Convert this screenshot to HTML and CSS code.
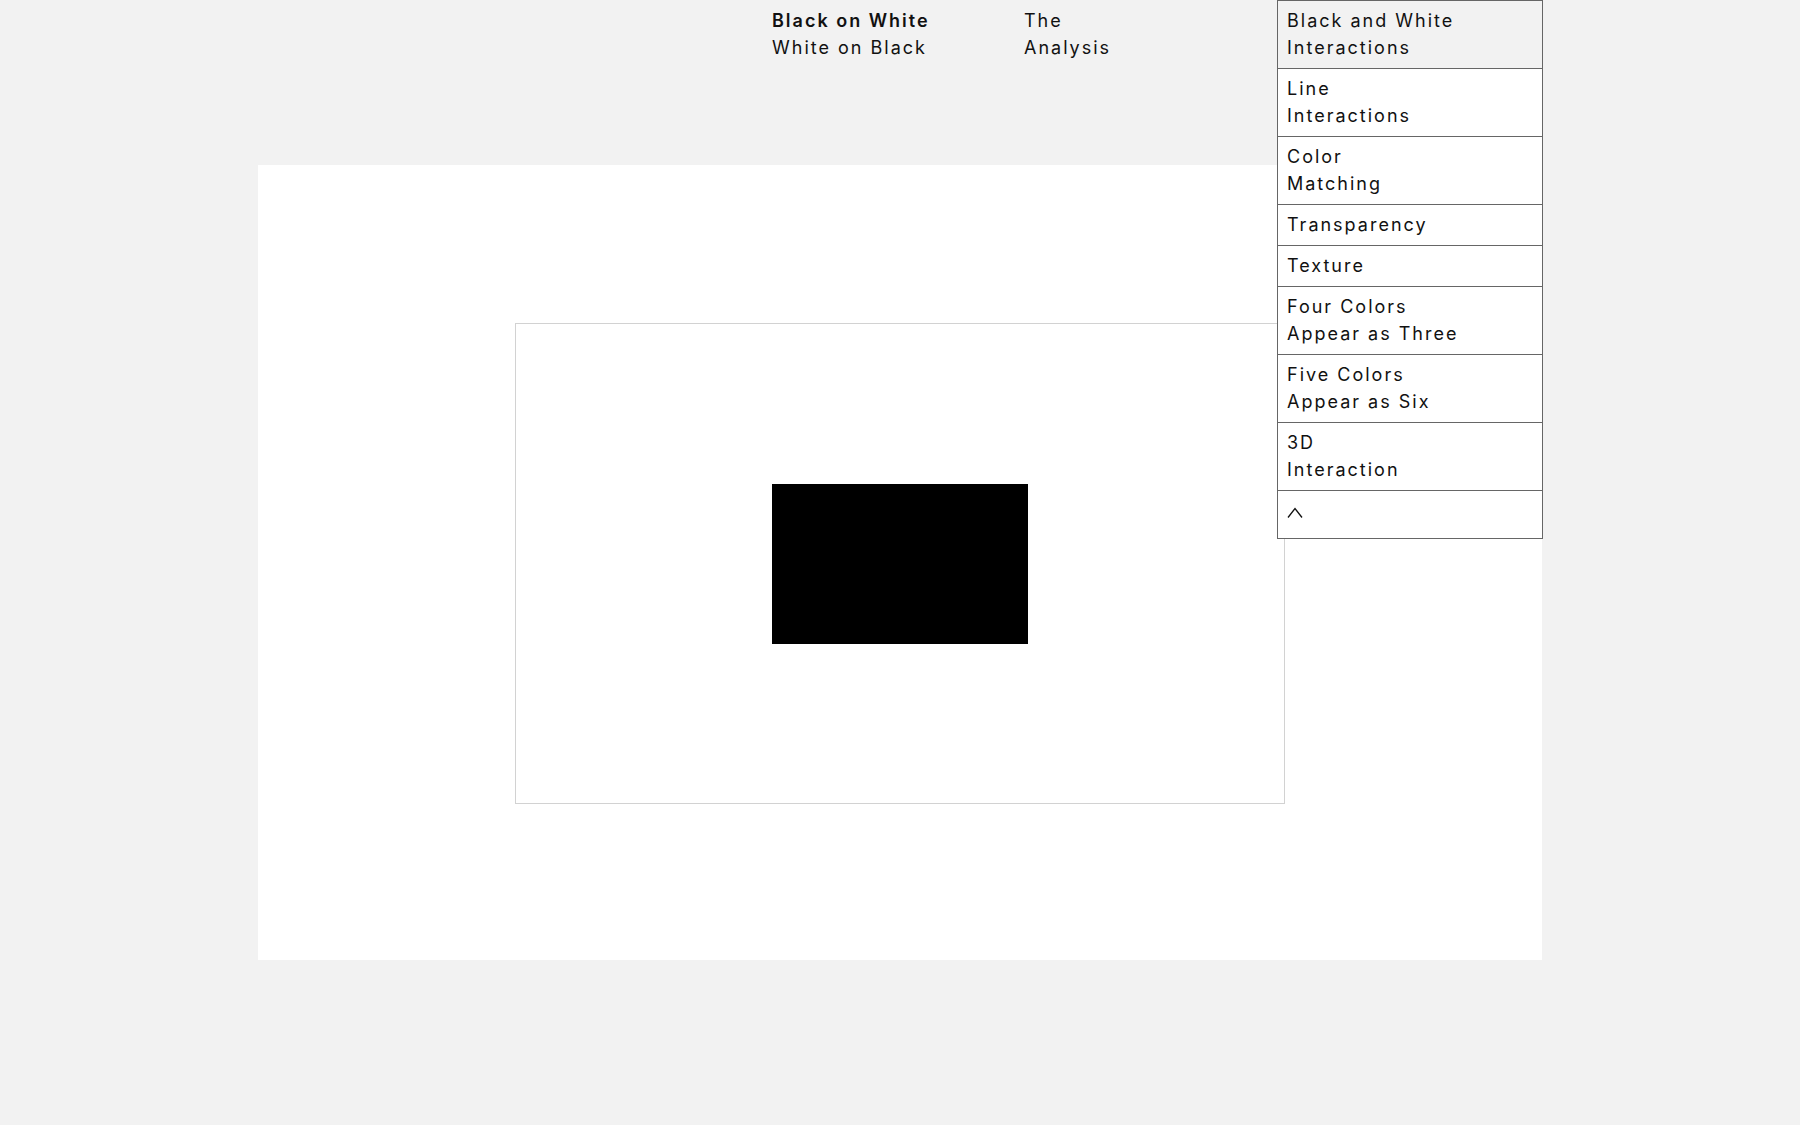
FILE: index.html
```html
<!DOCTYPE html>
<html lang="en">
<head>
<meta charset="utf-8">
<title>Interaction of Color</title>
<link rel="stylesheet" href="styles.css">
</head>
<body>
<header class="header">
  <nav class="nav-col nav-col-first">
    <a class="nav-link nav-link-active" href="#">Black on White</a>
    <a class="nav-link" href="#">White on Black</a>
  </nav>
  <nav class="nav-col">
    <a class="nav-link" href="#">The<br>Analysis</a>
  </nav>
  <ul class="menu">
    <li class="menu-item menu-item-current">Black and White<br>Interactions</li>
    <li class="menu-item">Line<br>Interactions</li>
    <li class="menu-item">Color<br>Matching</li>
    <li class="menu-item">Transparency</li>
    <li class="menu-item">Texture</li>
    <li class="menu-item">Four Colors<br>Appear as Three</li>
    <li class="menu-item">Five Colors<br>Appear as Six</li>
    <li class="menu-item">3D<br>Interaction</li>
    <li class="menu-item menu-item-toggle">
      <svg class="caret" width="16" height="11" viewBox="0 0 16 11"><polyline points="1,10.5 8,1.5 15,10.5" fill="none" stroke="#111" stroke-width="1.3"/></svg>
    </li>
  </ul>
</header>
<main class="canvas">
  <div class="frame">
    <div class="swatch"></div>
  </div>
</main>
</body>
</html>
```
FILE: styles.css
```css
* { box-sizing: border-box; }
html, body { margin: 0; padding: 0; }
body {
  background: #f2f2f2;
  color: #111;
  font-family: Inter, "Liberation Sans", sans-serif;
  font-size: 18px;
  line-height: 27px;
  letter-spacing: 2px;
  width: 1800px;
  height: 1125px;
  overflow: hidden;
}
.header {
  height: 165px;
  display: flex;
  align-items: flex-start;
  padding-left: 772px;
}
.nav-col {
  display: flex;
  flex-direction: column;
  padding-top: 7px;
  width: 253px;
}
.nav-col-first { width: 252px; }
.nav-link {
  color: #111;
  text-decoration: none;
}
.nav-link-active { font-weight: 600; }
.menu {
  position: relative;
  z-index: 2;
  list-style: none;
  margin: 0;
  padding: 0;
  width: 266px;
  border: 1px solid #666;
  background: #fff;
}
.menu-item {
  padding: 6px 9px 7px 9px;
  border-top: 1px solid #666;
  background: #fff;
}
.menu-item:first-child { border-top: none; }
.menu-item-current { background: #f2f2f2; }
.menu-item-toggle {
  height: 48px;
  display: flex;
  align-items: center;
  padding-top: 3px;
}
.caret { display: block; }
.canvas {
  width: 1284px;
  height: 795px;
  margin: 0 auto;
  background: #fff;
  display: flex;
  align-items: center;
  justify-content: center;
  padding-top: 2px;
}
.frame {
  width: 770px;
  height: 481px;
  border: 1px solid #d2d2d2;
  display: flex;
  align-items: center;
  justify-content: center;
}
.swatch {
  width: 256px;
  height: 160px;
  background: #000;
}
```
